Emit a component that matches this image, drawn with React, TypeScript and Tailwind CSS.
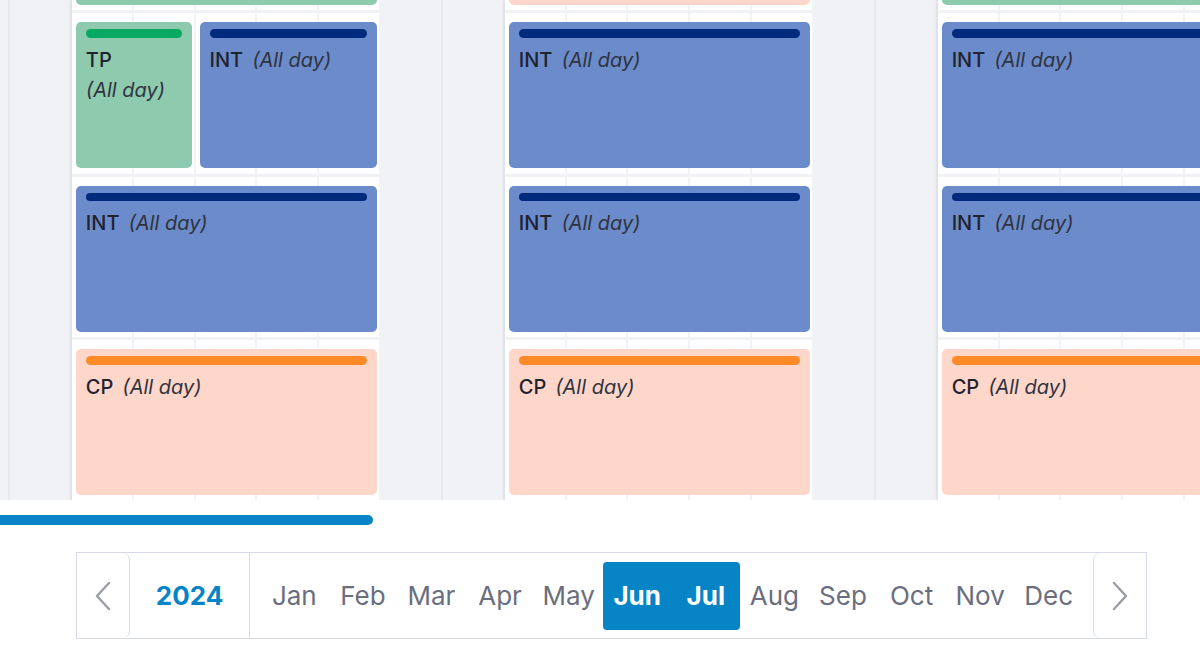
type Kind = "tp" | "int" | "cp";

interface CalEvent {
    pos: string;
    kind: Kind;
    hidden?: boolean;
}

const kinds: Record<Kind, { card: string; bar: string; label: string }> = {
    tp: { card: "bg-[#8ecaae]", bar: "bg-[#08a963]", label: "TP" },
    int: { card: "bg-[#6b8bca]", bar: "bg-[#002a7c]", label: "INT" },
    cp: { card: "bg-[#fed7ca]", bar: "bg-[#fb8a27]", label: "CP" },
};

// columns: 1-2 weekend, 3-7 week, 8-9 weekend, 10-14 week, 15-16 weekend, 17-21 week
const groups = [
    { weekend: true, days: 2 },
    { weekend: false, days: 5 },
    { weekend: true, days: 2 },
    { weekend: false, days: 5 },
    { weekend: true, days: 2 },
    { weekend: false, days: 5 },
];

const separators = [
    "col-start-3 col-span-5 row-start-1", "col-start-10 col-span-5 row-start-1", "col-start-17 col-span-5 row-start-1",
    "col-start-3 col-span-5 row-start-2", "col-start-10 col-span-5 row-start-2", "col-start-17 col-span-5 row-start-2",
    "col-start-3 col-span-5 row-start-3", "col-start-10 col-span-5 row-start-3", "col-start-17 col-span-5 row-start-3",
];

const events: CalEvent[] = [
    // previous row, only the bottom edge shows
    { pos: "col-start-3 col-span-5 row-start-1", kind: "tp", hidden: true },
    { pos: "col-start-10 col-span-5 row-start-1", kind: "cp", hidden: true },
    { pos: "col-start-17 col-span-5 row-start-1", kind: "tp", hidden: true },
    { pos: "col-start-3 col-span-2 row-start-2", kind: "tp" },
    { pos: "col-start-5 col-span-3 row-start-2", kind: "int" },
    { pos: "col-start-10 col-span-5 row-start-2", kind: "int" },
    { pos: "col-start-17 col-span-5 row-start-2", kind: "int" },
    { pos: "col-start-3 col-span-5 row-start-3", kind: "int" },
    { pos: "col-start-10 col-span-5 row-start-3", kind: "int" },
    { pos: "col-start-17 col-span-5 row-start-3", kind: "int" },
    { pos: "col-start-3 col-span-5 row-start-4", kind: "cp" },
    { pos: "col-start-10 col-span-5 row-start-4", kind: "cp" },
    { pos: "col-start-17 col-span-5 row-start-4", kind: "cp" },
];

const months = ["Jan", "Feb", "Mar", "Apr", "May", "Jun", "Jul", "Aug", "Sep", "Oct", "Nov", "Dec"];

function EventCard({ ev }: { ev: CalEvent }) {
    const k = kinds[ev.kind];
    return (
        <div className={`${ev.pos} ${k.card} mx-[4px] my-[8.75px] rounded-[5px] px-[10px] pt-[7px] overflow-hidden`}>
            <div className={`${k.bar} h-[8.5px] rounded-full`} />
            {!ev.hidden && (
                <div className="mt-[7px] flex flex-wrap gap-x-[9px] text-[20px] leading-[30px] text-[#1f2330]">
                    <span className="font-medium">{k.label}</span>
                    <span className="italic text-[#2f3340]">(All day)</span>
                </div>
            )}
        </div>
    );
}

function Chevron({ dir }: { dir: "left" | "right" }) {
    return (
        <svg width="16" height="30" viewBox="0 0 16 30" fill="none" stroke="currentColor" strokeWidth="2.4" strokeLinecap="round" strokeLinejoin="round">
            {dir === "left" ? <polyline points="14,2 2,15 14,28" /> : <polyline points="2,2 14,15 2,28" />}
        </svg>
    );
}

export default function App() {
    return (
        <div className="w-[1200px] h-[658px] bg-white overflow-hidden font-['Inter',sans-serif]">
            {/* timeline */}
            <div className="relative h-[500px] overflow-hidden bg-[#f0f2f6]">
                <div className="flex h-full ml-[-51.85px]">
                    {groups.map((g, gi) => (
                        <div
                            key={gi}
                            className={`flex shrink-0 h-full ${g.weekend ? "bg-[#f0f2f6]" : "bg-white shadow-[0_0_6px_rgba(30,40,70,0.08)]"}`}
                        >
                            {Array.from({ length: g.days }).map((_, di) => (
                                <div
                                    key={di}
                                    className={`w-[61.85px] h-full shrink-0 border-r-2 ${g.weekend ? "border-[#e7e9ee]" : "border-[#f2f3f6]"}`}
                                />
                            ))}
                        </div>
                    ))}
                </div>

                <div className="absolute left-[-51.85px] top-[-150.25px] grid grid-cols-[repeat(21,61.85px)] grid-rows-[repeat(4,163.5px)]">
                    {separators.map((s, i) => (
                        <div key={`s${i}`} className={`${s} self-end h-[3px] bg-[#f1f2f6]`} />
                    ))}
                    {events.map((ev, i) => (
                        <EventCard key={i} ev={ev} />
                    ))}
                </div>
            </div>

            {/* scrollbar */}
            <div className="mt-[15px] h-[10px] w-[373px] rounded-r-full bg-[#0784c6]" />

            {/* month picker */}
            <div className="mt-[27px] ml-[76px] w-[1071px] h-[87px] border border-[#d5d9ea] flex">
                <button className="w-[53px] h-full flex items-center justify-center border-r border-[#d5d9ea] rounded-r-[7px] text-[#9b9da5]">
                    <Chevron dir="left" />
                </button>
                <div className="w-[120px] h-full flex items-center justify-center border-r border-[#d5d9ea] text-[26px] font-bold text-[#0784c6]">
                    2024
                </div>
                <div className="flex-1 px-[10px] grid grid-cols-12 items-center">
                    {months.map((m) => {
                        if (m === "Jul") return null;
                        if (m === "Jun") {
                            return (
                                <div
                                    key={m}
                                    className="col-span-2 h-[68px] rounded-[4px] bg-[#0784c6] grid grid-cols-2 items-center text-[26px] font-bold text-white"
                                >
                                    <span className="text-center">Jun</span>
                                    <span className="text-center">Jul</span>
                                </div>
                            );
                        }
                        return (
                            <span key={m} className="text-center text-[26px] text-[#6b6e7e]">
                                {m}
                            </span>
                        );
                    })}
                </div>
                <button className="w-[53px] h-full flex items-center justify-center border-l border-[#d5d9ea] rounded-l-[7px] text-[#9b9da5]">
                    <Chevron dir="right" />
                </button>
            </div>
        </div>
    );
}
